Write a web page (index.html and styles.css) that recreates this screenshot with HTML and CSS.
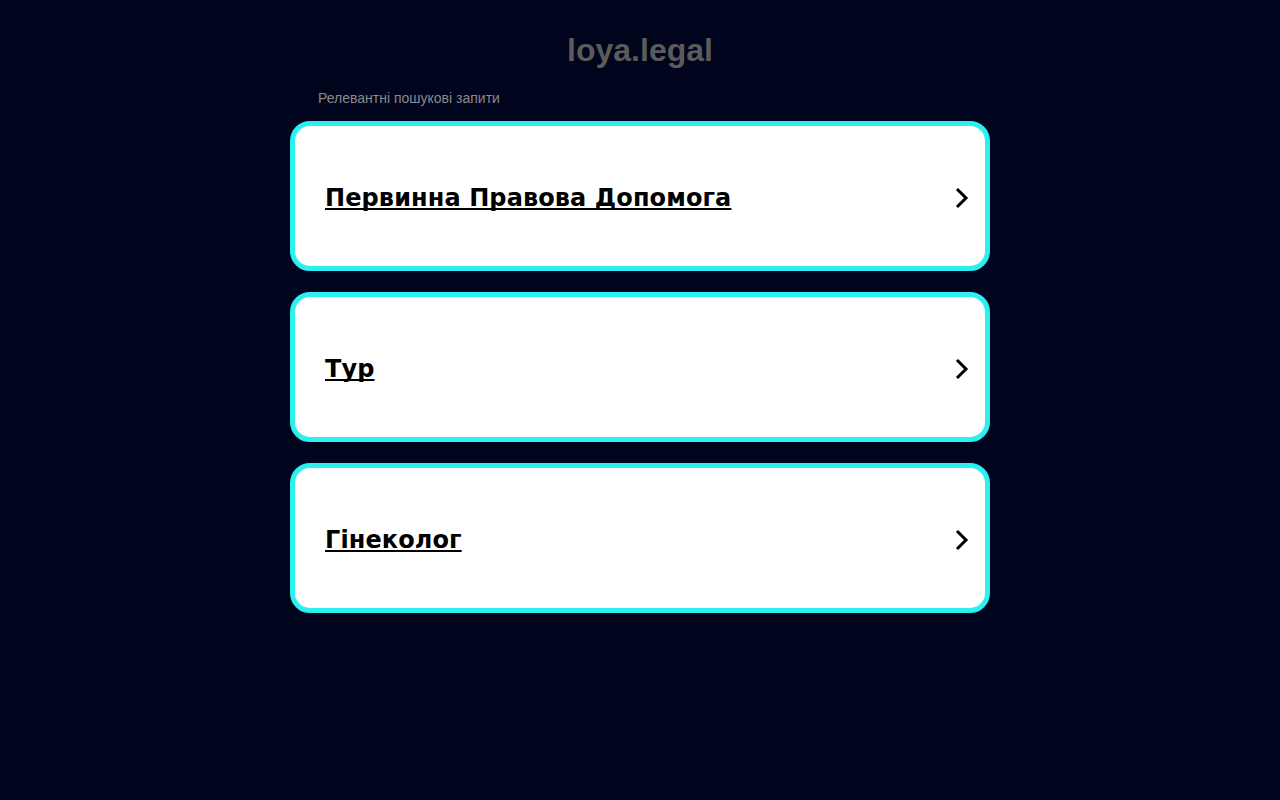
FILE: index.html
```html
<!DOCTYPE html>
<html lang="uk">
<head>
<meta charset="utf-8">
<title>loya.legal</title>
<link rel="stylesheet" href="styles.css">
</head>
<body>
<div class="page">
  <h1 class="domain">loya.legal</h1>
  <div class="related">Релевантні пошукові запити</div>
  <ul class="links">
    <li class="card"><a href="#">Первинна Правова Допомога</a><svg class="chev" viewBox="0 0 14 22" width="14" height="22"><path d="M2 2 L11 11 L2 20" fill="none" stroke="#000" stroke-width="3"/></svg></li>
    <li class="card"><a href="#">Тур</a><svg class="chev" viewBox="0 0 14 22" width="14" height="22"><path d="M2 2 L11 11 L2 20" fill="none" stroke="#000" stroke-width="3"/></svg></li>
    <li class="card"><a href="#">Гінеколог</a><svg class="chev" viewBox="0 0 14 22" width="14" height="22"><path d="M2 2 L11 11 L2 20" fill="none" stroke="#000" stroke-width="3"/></svg></li>
  </ul>
</div>
</body>
</html>
```
FILE: styles.css
```css
html, body {
  margin: 0;
  padding: 0;
  background: #00041c;
  height: 100%;
}
.page {
  width: 700px;
  margin: 0 auto;
  padding-top: 31px;
  font-family: "Liberation Sans", Arial, sans-serif;
}
.domain {
  margin: 0;
  text-align: center;
  font-size: 32px;
  font-weight: bold;
  line-height: 38px;
  color: #5b5b5b;
}
.related {
  margin: 20px 0 0 28px;
  font-size: 14px;
  line-height: 18px;
  color: #8a8a8e;
}
.links {
  list-style: none;
  margin: 14px 0 0;
  padding: 0;
  display: flex;
  flex-direction: column;
  gap: 21px;
}
.card {
  box-sizing: border-box;
  height: 150px;
  border: 5px solid #2cf0f0;
  border-radius: 20px;
  background: #fff;
  display: flex;
  align-items: center;
  justify-content: space-between;
  padding: 3px 16px 0 30px;
}
.card a {
  font-family: "DejaVu Sans", Verdana, sans-serif;
  font-weight: bold;
  font-size: 24px;
  letter-spacing: 0.1px;
  color: #000;
  text-decoration: underline;
  text-decoration-thickness: 2px;
  text-underline-offset: 2px;
  text-decoration-skip-ink: none;
}
.chev {
  display: block;
}
```
